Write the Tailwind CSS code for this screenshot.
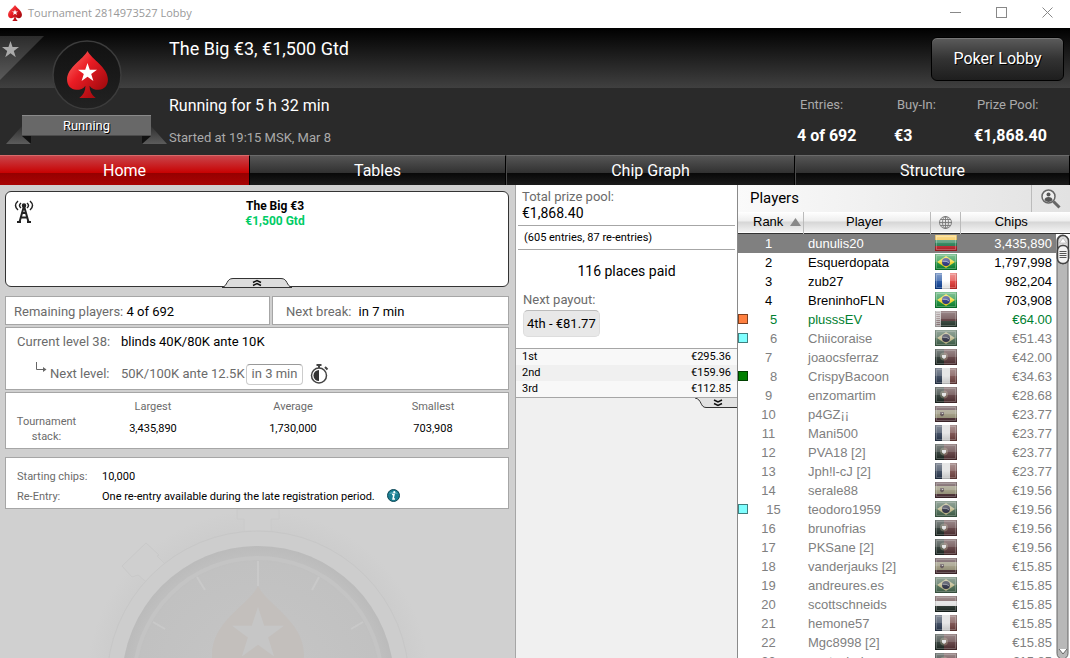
<!DOCTYPE html>
<html lang="en">
<head>
    <meta charset="UTF-8">
    <meta name="viewport" content="width=device-width, initial-scale=1.0">
    <title>Tournament 2814973527 Lobby</title>
    <script src="https://cdn.jsdelivr.net/npm/@tailwindcss/browser@4"></script>
</head>
<body class="h-screen overflow-hidden flex flex-col bg-[#d0d0d0] text-black font-['Roboto',sans-serif]">
    <!-- Shared shapes -->
    <svg class="w-0 h-0 shrink-0">
        <defs>
            <linearGradient id="red" x1="0" y1="0" x2="1" y2="1">
                <stop offset="0" stop-color="#ff7a70"/>
                <stop offset=".4" stop-color="#ea1c24"/>
                <stop offset="1" stop-color="#8d0508"/>
            </linearGradient>
            <linearGradient id="gloss" x1="0" y1="0" x2="0" y2="1">
                <stop offset="0" stop-color="#fff" stop-opacity=".5"/>
                <stop offset=".5" stop-color="#fff" stop-opacity=".3"/>
                <stop offset=".5" stop-color="#fff" stop-opacity=".15"/>
                <stop offset="1" stop-color="#000" stop-opacity=".15"/>
            </linearGradient>
        </defs>
        <symbol id="spade" viewBox="0 0 40 46">
            <path d="M20 0C24 8 40 16 40 28c0 6-4 10-9 10-4 0-7-1-9-4 0 5 2 9 6 12H12c4-3 6-7 6-12-2 3-5 4-9 4-5 0-9-4-9-10C0 16 16 8 20 0z"/>
        </symbol>
        <symbol id="star" viewBox="0 0 20 20">
            <path d="M10 0l2.4 7.2H20l-6.1 4.5 2.3 7.3L10 14.5 3.8 19l2.3-7.3L0 7.2h7.6z"/>
        </symbol>
        <symbol id="shine" viewBox="0 0 22 16">
            <rect width="22" height="16" fill="url(#gloss)"/>
            <rect x="1.5" y="1.5" width="19" height="13" fill="none" stroke="#fff" stroke-opacity=".25"/>
            <path d="M.5 0v15.500h21V0" fill="none" stroke="#000" stroke-opacity=".12"/>
        </symbol>
        <symbol id="flag-lt" viewBox="0 0 22 16">
            <rect width="22" height="6" fill="#f5b820"/><rect y="5" width="22" height="6" fill="#1a7a4c"/><rect y="11" width="22" height="5" fill="#c32028"/>
            <use href="#shine"/>
        </symbol>
        <symbol id="flag-br" viewBox="0 0 22 16">
            <rect width="22" height="16" fill="#0a8a30"/><path d="M11 2l9 6-9 6-9-6z" fill="#f3d51f"/><circle cx="11" cy="8" r="4" fill="#1c2778"/><path d="M7.600 7.200q4-.6 6.800 1.800" stroke="#fff" stroke-opacity=".5" fill="none"/>
            <use href="#shine"/>
        </symbol>
        <symbol id="flag-fr" viewBox="0 0 22 16">
            <rect width="22" height="16" fill="#fff"/><rect width="7" height="16" fill="#0c429a"/><rect x="15" width="7" height="16" fill="#e0302c"/>
            <use href="#shine"/>
        </symbol>
        <symbol id="flag-by" viewBox="0 0 22 16">
            <rect width="22" height="16" fill="#a8202a"/><rect y="10" width="22" height="6" fill="#0d4d25"/><rect width="6" height="16" fill="#e6d4d4"/><path d="M2 1v14M4 1v14" stroke="#b8202a" stroke-dasharray="1 1"/>
            <use href="#shine"/>
        </symbol>
        <symbol id="flag-pt" viewBox="0 0 22 16">
            <rect width="22" height="16" fill="#a3232c"/><rect width="9" height="16" fill="#06351f"/><circle cx="9" cy="7.500" r="4" fill="#d8b84a" fill-opacity=".4"/><path d="M7 6h4v2.500l-2 1.500-2-1.500z" fill="#fff"/>
            <use href="#shine"/>
        </symbol>
        <symbol id="flag-es" viewBox="0 0 22 16">
            <rect width="22" height="16" fill="#8f1f35"/><rect y="4" width="22" height="8" fill="#b9a840"/><path d="M5 6h4v3l-2 1.500L5 9z" fill="#7c4a55"/><rect x="7" y="7" width="1" height="1" fill="#ddd"/>
            <use href="#shine"/>
        </symbol>
        <symbol id="flag-hu" viewBox="0 0 22 16">
            <rect width="22" height="16" fill="#fff"/><rect width="22" height="5" fill="#b03038"/><rect y="10" width="22" height="6" fill="#06351f"/>
            <use href="#shine"/>
        </symbol>
    </svg>

    <!-- Window title bar -->
    <div class="h-7 shrink-0 bg-white flex items-center justify-between pl-2">
        <div class="flex items-center gap-1.5 pb-0.5">
            <svg class="w-3.5 h-4" viewBox="0 0 40 46"><use href="#spade" width="40" height="46" fill="url(#red)"/><use href="#star" x="11" y="12" width="18" height="18" fill="#fff"/></svg>
            <span class="text-[11px] text-[#999] font-['Open_Sans',sans-serif]">Tournament 2814973527 Lobby</span>
        </div>
        <div class="flex text-[#888] pb-1">
            <button aria-label="Minimize" class="w-[46px] flex justify-center"><svg class="w-[11px] h-[11px]" viewBox="0 0 11 11" stroke="currentColor"><path d="M0 5.500h11"/></svg></button>
            <button aria-label="Maximize" class="w-[46px] flex justify-center"><svg class="w-[11px] h-[11px]" viewBox="0 0 11 11" stroke="currentColor" fill="none"><rect x=".5" y=".5" width="10" height="10"/></svg></button>
            <button aria-label="Close" class="w-[46px] flex justify-center"><svg class="w-[11px] h-[11px]" viewBox="0 0 11 11" stroke="currentColor"><path d="M.5.5l10 10M10.500.5l-10 10"/></svg></button>
        </div>
    </div>

    <!-- Tournament header -->
    <header class="h-[127px] shrink-0 flex bg-[linear-gradient(#000,#404040_60px,#2a2a2a_60px)] text-white">
        <div class="relative w-[169px] shrink-0">
            <svg class="w-[169px] h-[127px]" viewBox="0 0 169 127">
                <defs>
                    <linearGradient id="corner" x1="0" y1="0" x2="0" y2="1"><stop offset="0" stop-color="#2c2c2c"/><stop offset="1" stop-color="#5a5a5a"/></linearGradient>
                    <linearGradient id="fold" x1="0" y1="0" x2="0" y2="1"><stop offset="0" stop-color="#2f2f2f"/><stop offset="1" stop-color="#5c5c5c"/></linearGradient>
                    <linearGradient id="disc" x1="0" y1="0" x2="0" y2="1"><stop offset="0" stop-color="#111"/><stop offset="1" stop-color="#222"/></linearGradient>
                </defs>
                <path d="M0 8h44L0 52z" fill="url(#corner)"/>
                <use href="#star" x="2" y="13" width="17" height="17" fill="#aaa"/>
                <circle cx="87" cy="47" r="34" fill="url(#disc)" stroke="#3c3c3c" stroke-width="1.500"/>
                <use href="#spade" x="67" y="23" width="41" height="47" fill="url(#red)"/>
                <use href="#star" x="78" y="35" width="19" height="19" fill="#fff"/>
                <path d="M22 98L6 116h25v-8h-9zM151 98l16 18h-25v-8h9z" fill="url(#fold)"/>
                <path d="M22 108h9v8zM151 108h-9v8z" fill="#111"/>
                <rect x="22" y="87" width="129" height="21" fill="#686868"/>
                <path d="M22 87.500h129" stroke="#8a8a8a"/>
                <path d="M22 107.500h129" stroke="#4c4c4c"/>
            </svg>
            <span class="absolute left-[22px] top-[87px] w-[129px] text-center text-[13px] leading-[21px] text-shadow-[1px_1px_0_#000]">Running</span>
        </div>
        <div class="grow pt-[9px]">
            <h1 class="text-[18px] leading-6">The Big €3, €1,500 Gtd</h1>
            <p class="mt-[33px] text-[16px] leading-6">Running for 5 h 32 min</p>
            <p class="mt-2.5 text-[13px] leading-5 text-[#aaa]">Started at 19:15 MSK, Mar 8</p>
        </div>
        <div class="w-[273px] flex flex-col">
            <button class="mt-[9px] mr-1.5 self-end w-[133px] h-11 rounded-md border border-black text-[16px] bg-linear-to-b from-[#5c5c5c] via-[#333] to-[#1e1e1e] inset-shadow-[0_1px_0_#777] text-shadow-[1px_1px_0_#000]">Poker Lobby</button>
            <dl class="mt-3 grid grid-cols-[97px_80px_96px]">
                <div>
                    <dt class="pl-[3px] text-[13px] leading-6 text-[#aaa]">Entries:</dt>
                    <dd class="mt-[7px] text-[16px] leading-6 font-bold">4 of 692</dd>
                </div>
                <div>
                    <dt class="pl-[3px] text-[13px] leading-6 text-[#aaa]">Buy-In:</dt>
                    <dd class="mt-[7px] text-[16px] leading-6 font-bold">€3</dd>
                </div>
                <div>
                    <dt class="pl-[3px] text-[13px] leading-6 text-[#aaa]">Prize Pool:</dt>
                    <dd class="mt-[7px] text-[16px] leading-6 font-bold">€1,868.40</dd>
                </div>
            </dl>
        </div>
    </header>

    <!-- Tabs -->
    <nav class="h-[30px] shrink-0 grid grid-cols-[250fr_256fr_289fr_275fr] text-[16px] text-white text-shadow-[1px_1px_0_#000]">
        <button class="border-t border-t-[#d86a6a] border-r border-r-black bg-[linear-gradient(#c9444a,#c80000_60%,#960000_60%,#a80404)]">Home</button>
        <button class="border-t border-t-[#6a6a6a] border-r border-r-black bg-[linear-gradient(#555,#303030_60%,#090909_60%,#1b1b1b)]">Tables</button>
        <button class="border-t border-t-[#6a6a6a] border-x border-l-[#4a4a4a] border-r-black bg-[linear-gradient(#555,#303030_60%,#090909_60%,#1b1b1b)]">Chip Graph</button>
        <button class="border-t border-t-[#6a6a6a] border-x border-l-[#4a4a4a] border-r-black bg-[linear-gradient(#555,#303030_60%,#090909_60%,#1b1b1b)]">Structure</button>
    </nav>

    <main class="grow min-h-0 flex">
        <!-- Home panel -->
        <section class="grow min-w-0 flex flex-col px-[5px] pt-1.5 overflow-hidden text-[#6b6b6b]">
            <div class="relative h-24 shrink-0 mr-px bg-white border border-[#333] rounded-md">
                <svg class="absolute left-2 top-2 w-5 h-[23px]" viewBox="0 0 20 23" fill="none" stroke="#222" stroke-width="1.500">
                    <path d="M4 1Q-1 5.500 4 10M7 3Q4 5.500 7 8M16 1q5 4.500 0 9M13 3q3 2.500 0 5"/>
                    <circle cx="10" cy="5.500" r="1.500" fill="#222"/>
                    <path d="M10 6L5.500 22M10 6l4.500 16M8 13h4M7 17.500h6M3 22h4M13 22h4" stroke-width="2"/>
                </svg>
                <div class="pt-[7px] pl-9 text-center text-[12px] leading-[15px] font-bold">
                    <p class="text-black">The Big €3</p>
                    <p class="text-[#0c6]">€1,500 Gtd</p>
                </div>
                <button aria-label="Collapse" class="absolute left-1/2 -bottom-0.5 -translate-x-1/2">
                    <svg class="block w-[70px] h-[11px]" viewBox="0 0 70 11" fill="none">
                        <path d="M0 10.500C6 9 4 1.500 11 1.500h48C66 1.500 64 9 70 10.500z" fill="#ddd" stroke="#333"/>
                        <path d="M31 5.500l4-2 4 2M31 8.500l4-2 4 2" stroke="#111" stroke-width="1.500"/>
                    </svg>
                </button>
            </div>

            <div class="mt-[9px] mr-px grid grid-cols-[265fr_237fr] gap-0.5 text-[13px] leading-[25px]">
                <p class="bg-white border border-[#a6a6a6] pt-0.5 pl-2">Remaining players: <span class="text-black">4 of 692</span></p>
                <p class="bg-white border border-[#a6a6a6] pt-0.5 pl-[13px]">Next break: <span class="ml-1 text-black">in 7 min</span></p>
            </div>

            <div class="mt-0.5 mr-px h-[63px] shrink-0 bg-white border border-[#a6a6a6] pl-[11px] text-[13px] whitespace-nowrap">
                <div class="flex leading-7">
                    <span class="w-[104px]">Current level 38:</span>
                    <span class="text-black">blinds 40K/80K ante 10K</span>
                </div>
                <div class="flex items-center h-9">
                    <svg class="ml-[18px] mb-3 w-3 h-3 shrink-0" viewBox="0 0 12 12" fill="none" stroke="#666"><path d="M1.500 0v7.500H10"/><path d="M8 5l3.500 2.500L8 10z" fill="#666" stroke="none"/></svg>
                    <span class="w-[74px] pl-[3px]">Next level:</span>
                    <span class="w-[125px]">50K/100K ante 12.5K</span>
                    <span class="w-[57px] h-[21px] leading-[18px] text-center border border-[#ccc] border-t-[#999] rounded">in 3 min</span>
                    <svg class="ml-[7px] w-[19px] h-5 shrink-0" viewBox="0 0 19 20" fill="none" stroke="#444">
                        <circle cx="9" cy="11.500" r="7.500" stroke-width="1.500"/>
                        <path d="M9 6a5.500 5.500 0 0 0 0 11z" fill="#333" stroke="none"/>
                        <path d="M6.500 1h5M9 1v3M15 3l2.500 2.500" stroke-width="2"/>
                    </svg>
                </div>
            </div>

            <dl class="mt-0.5 mr-px h-[57px] shrink-0 bg-white border border-[#a6a6a6] grid grid-cols-[77px_140px_140px_140px] text-center text-[11px]">
                <div class="pt-[21px] pl-1 leading-[15px]">Tournament stack:</div>
                <div class="pt-1"><dt class="leading-5">Largest</dt><dd class="leading-6 text-black">3,435,890</dd></div>
                <div class="pt-1"><dt class="leading-5">Average</dt><dd class="leading-6 text-black">1,730,000</dd></div>
                <div class="pt-1"><dt class="leading-5">Smallest</dt><dd class="leading-6 text-black">703,908</dd></div>
            </dl>

            <dl class="mt-2 mr-px h-[52px] shrink-0 bg-white border border-[#a6a6a6] pt-[9px] pl-[11px] grid grid-cols-[85px_auto] content-start text-[11px] leading-5">
                <dt>Starting chips:</dt>
                <dd class="text-black">10,000</dd>
                <dt>Re-Entry:</dt>
                <dd class="text-black flex items-center gap-3">One re-entry available during the late registration period.
                    <svg class="mb-1 w-[13px] h-[13px]" viewBox="0 0 13 13"><circle cx="6.500" cy="6.500" r="6" fill="#1b7f93" stroke="#0d4654"/><path d="M2 5a5 4 0 0 1 9 0z" fill="#4fa3b3"/><path d="M5 5.500h2L6 10h2" stroke="#fff" stroke-width="1.500" fill="none"/><circle cx="7.300" cy="3.200" r="1.100" fill="#fff"/></svg>
                </dd>
            </dl>

            <!-- Stopwatch watermark -->
            <svg class="w-[360px] h-[320px] shrink-0 self-center" viewBox="77 509 360 320" fill="none">
                <defs>
                    <radialGradient id="halo" cx="257" cy="682" r="172" gradientUnits="userSpaceOnUse"><stop offset=".86" stop-color="#ccc"/><stop offset="1" stop-color="#d0d0d0"/></radialGradient>
                    <radialGradient id="dial" cx="257" cy="682" r="136" gradientUnits="userSpaceOnUse"><stop offset="0" stop-color="#c6c6c6"/><stop offset=".88" stop-color="#c1c1c1"/><stop offset="1" stop-color="#bbb"/></radialGradient>
                </defs>
                <circle cx="257" cy="682" r="172" fill="url(#halo)"/>
                <path d="M236 509h42v10h-8v12h-27v-12h-7z" fill="#cfcfcf" stroke="#cacaca"/>
                <path d="M145 543l-24 23 10 11 6-2 12 10 18-18-11-11 2-1z" fill="#cfcfcf" stroke="#c9c9c9"/>
                <circle cx="257" cy="682" r="143.500" stroke="#cdcdcd" stroke-width="15"/>
                <circle cx="257" cy="682" r="151" stroke="#c7c7c7"/>
                <circle cx="257" cy="682" r="136" fill="url(#dial)"/>
                <circle cx="257" cy="682" r="124" stroke="#c4c4c4" stroke-width="4"/>
                <path d="M257 561v25M196 577l8 13M318 577l-7 13M152 622l12 7M362 622l-12 7" stroke="#c9c9c9" stroke-width="2"/>
                <path d="M257 586C266 605 303 621 303 655c0 24-30 30-46 18-16 12-46 6-46-18 0-34 37-50 46-69z" fill="#c3bfbc"/>
                <use href="#star" x="231" y="607" width="52" height="52" fill="#c6c6c6"/>
            </svg>
        </section>

        <!-- Prizes -->
        <section class="w-[222px] shrink-0 bg-[#f0f0f0] border-l border-[#a6a6a6]">
            <div class="bg-white">
                <div class="pl-1.5 pt-1 h-10">
                    <p class="text-[13px] leading-4 text-[#6b6b6b]">Total prize pool:</p>
                    <p class="text-[14px] leading-[17px]">€1,868.40</p>
                </div>
                <p class="mx-0.5 pl-1.5 border-y border-[#a6a6a6] text-[11px] leading-[23px]">(605 entries, 87 re-entries)</p>
                <p class="pt-[9px] text-center text-[14px] leading-6">116 places paid</p>
                <div class="pl-[7px] pt-[9px] h-[65px] text-[13px]">
                    <p class="leading-4 text-[#6b6b6b]">Next payout:</p>
                    <p class="mt-0.5 inline-block px-[3px] leading-[25px] rounded-[5px] border border-[#ddd] border-t-[#bbb] bg-[#e8e8e8]">4th - €81.77</p>
                </div>
            </div>
            <table class="w-full border-y border-[#a6a6a6] text-[11px] leading-4">
                <tbody>
                    <tr class="bg-[#f8f8f8]"><td class="p-0 pl-1.5">1st</td><td class="p-0 pr-1.5 text-right">€295.36</td></tr>
                    <tr class="bg-[#f0f0f0]"><td class="p-0 pl-1.5">2nd</td><td class="p-0 pr-1.5 text-right">€159.96</td></tr>
                    <tr class="bg-[#f8f8f8]"><td class="p-0 pl-1.5">3rd</td><td class="p-0 pr-1.5 text-right">€112.85</td></tr>
                </tbody>
            </table>
            <button aria-label="Expand" class="block ml-auto">
                <svg class="block w-[42px] h-2.5" viewBox="0 0 42 10" fill="none">
                    <path d="M0 0c7 1 5 9.500 11 9.500h31V0z" fill="#e2e2e2"/>
                    <path d="M0 0c7 1 5 9.500 11 9.500h31" stroke="#333"/>
                    <path d="M19 2l4 2 4-2M19 5.500l4 2 4-2" stroke="#111" stroke-width="1.500"/>
                </svg>
            </button>
        </section>

        <!-- Players -->
        <section class="relative w-[333px] shrink-0 bg-white border-l border-[#8a8a8a] overflow-hidden font-['Liberation_Sans',Arial,sans-serif]">
            <div class="h-[27px] flex items-center justify-between bg-linear-to-r from-[#fafafa] to-[#e2e2e2]">
                <h2 class="pl-3 text-[15px] font-['Roboto',sans-serif]">Players</h2>
                <button aria-label="Find a player" class="w-[39px] h-full border-l border-[#bbb] flex items-center justify-center">
                    <svg class="w-5 h-5" viewBox="0 0 20 20" fill="none" stroke="#666">
                        <circle cx="7.500" cy="7.500" r="6.500" stroke-width="1.500" fill="#eee"/>
                        <circle cx="7.500" cy="5.500" r="2" fill="#555" stroke="none"/>
                        <path d="M3.500 11c0-4 8-4 8 0-2 2.500-6 2.500-8 0z" fill="#555" stroke="none"/>
                        <path d="M12.500 12.500l6 6" stroke-width="3"/>
                    </svg>
                </button>
            </div>
            <table class="w-full table-fixed text-[13px]">
                <thead>
                    <tr class="h-[21px] leading-5 border-b border-[#333] bg-[linear-gradient(#fff,#eee_45%,#d6d6d6_50%,#f2f2f2)]">
                        <th class="w-[65px] p-0 font-normal border-r border-[#bbb]">
                            <div class="flex items-center justify-between pl-[15px] pr-0.5">Rank
                                <svg class="w-[11px] h-2" viewBox="0 0 11 8"><path d="M5.500 0L11 8H0z" fill="#888"/></svg>
                            </div>
                        </th>
                        <th class="w-[127px] p-0 pr-1 font-normal border-r border-[#bbb]">Player</th>
                        <th class="w-[30px] p-0 border-r border-[#bbb]">
                            <svg class="mx-auto w-[13px] h-[13px]" viewBox="0 0 13 13" fill="none" stroke="#777" stroke-width=".9" aria-label="Country"><circle cx="6.500" cy="6.500" r="6"/><ellipse cx="6.500" cy="6.500" rx="3" ry="6"/><path d="M6.500 0v13M0 6.500h13M1.500 3.500h10M1.500 9.500h10"/></svg>
                        </th>
                        <th class="p-0 pr-2 font-normal">Chips</th>
                    </tr>
                </thead>
                <tbody id="playersList"></tbody>
            </table>
            <!-- Scrollbar -->
            <div class="absolute top-[49px] bottom-0 right-0 w-[14px] bg-white">
                <svg class="w-[14px] h-full" fill="none">
                    <rect x="1" y="1" width="11" height="100%" rx="5.500" fill="#b8b8b8" stroke="#666"/>
                </svg>
                <svg class="absolute left-0 top-0 w-[14px] h-8" viewBox="0 0 14 32" fill="none">
                    <rect x="1.500" y="1.500" width="11" height="28" rx="5.500" fill="#ddd" stroke="#444" stroke-width="1.500"/>
                    <path d="M7 4l3.500 5h-7z" fill="#fff" stroke="#999" stroke-width=".5"/>
                    <rect x="1.500" y="11.500" width="11" height="18" rx="5" fill="#f2f2f2" stroke="#444" stroke-width="1.500"/>
                    <path d="M3.500 17.500h7M3.500 19.500h7M3.500 21.500h7M3.500 23.500h7" stroke="#555"/>
                </svg>
                <svg class="absolute left-0 bottom-0 w-[14px] h-3" viewBox="0 0 14 12"><path d="M3 3l4 5 4-5" fill="#fff" stroke="#666"/></svg>
            </div>
        </section>
    </main>

    <script>
        const players = [
            { name: 'dunulis20', flag: 'lt', chips: '3,435,890' },
            { name: 'Esquerdopata', flag: 'br', chips: '1,797,998' },
            { name: 'zub27', flag: 'fr', chips: '982,204' },
            { name: 'BreninhoFLN', flag: 'br', chips: '703,908' },
            { name: 'plusssEV', flag: 'by', chips: '€64.00', mark: 'bg-[#ff8040] border-[#80401f]' },
            { name: 'Chiicoraise', flag: 'br', chips: '€51.43', mark: 'bg-[#80ffff] border-[#408080]' },
            { name: 'joaocsferraz', flag: 'pt', chips: '€42.00' },
            { name: 'CrispyBacoon', flag: 'fr', chips: '€34.63', mark: 'bg-[#008000] border-[#004000]' },
            { name: 'enzomartim', flag: 'pt', chips: '€28.68' },
            { name: 'p4GZ¡¡', flag: 'es', chips: '€23.77' },
            { name: 'Mani500', flag: 'fr', chips: '€23.77' },
            { name: 'PVA18 [2]', flag: 'pt', chips: '€23.77' },
            { name: 'Jph!l-cJ [2]', flag: 'fr', chips: '€23.77' },
            { name: 'serale88', flag: 'es', chips: '€19.56' },
            { name: 'teodoro1959', flag: 'br', chips: '€19.56', mark: 'bg-[#80ffff] border-[#408080]' },
            { name: 'brunofrias', flag: 'pt', chips: '€19.56' },
            { name: 'PKSane [2]', flag: 'pt', chips: '€19.56' },
            { name: 'vanderjauks [2]', flag: 'es', chips: '€15.85' },
            { name: 'andreures.es', flag: 'br', chips: '€15.85' },
            { name: 'scottschneids', flag: 'hu', chips: '€15.85' },
            { name: 'hemone57', flag: 'fr', chips: '€15.85' },
            { name: 'Mgc8998 [2]', flag: 'pt', chips: '€15.85' },
            { name: 'santaclarka', flag: 'pt', chips: '€15.85' }
        ];

        function rowColor(rank) {
            if (rank === 1) return 'bg-[#808080] text-white';
            if (rank <= 4) return 'text-black';
            if (rank === 5) return 'text-[#008030]';
            return 'text-[#808080]';
        }

        document.getElementById('playersList').innerHTML = players.map((p, i) => `
            <tr class="h-[19px] leading-[19px] ${rowColor(i + 1)}">
                <td class="p-0">
                    <div class="flex items-center w-[61px]">
                        ${p.mark ? `<i class="w-2.5 h-2.5 shrink-0 border ${p.mark}"></i>` : ''}
                        <span class="grow text-center">${i + 1}</span>
                    </div>
                </td>
                <td class="p-0 pl-[5px]">${p.name}</td>
                <td class="p-0 pl-[5px]"><svg class="w-[22px] h-4 ${i < 4 ? '' : 'saturate-30 brightness-90'}" viewBox="0 0 22 16"><use href="#flag-${p.flag}"/></svg></td>
                <td class="p-0 pr-[18px] text-right">${p.chips}</td>
            </tr>
        `).join('');
    </script>
</body>
</html>
